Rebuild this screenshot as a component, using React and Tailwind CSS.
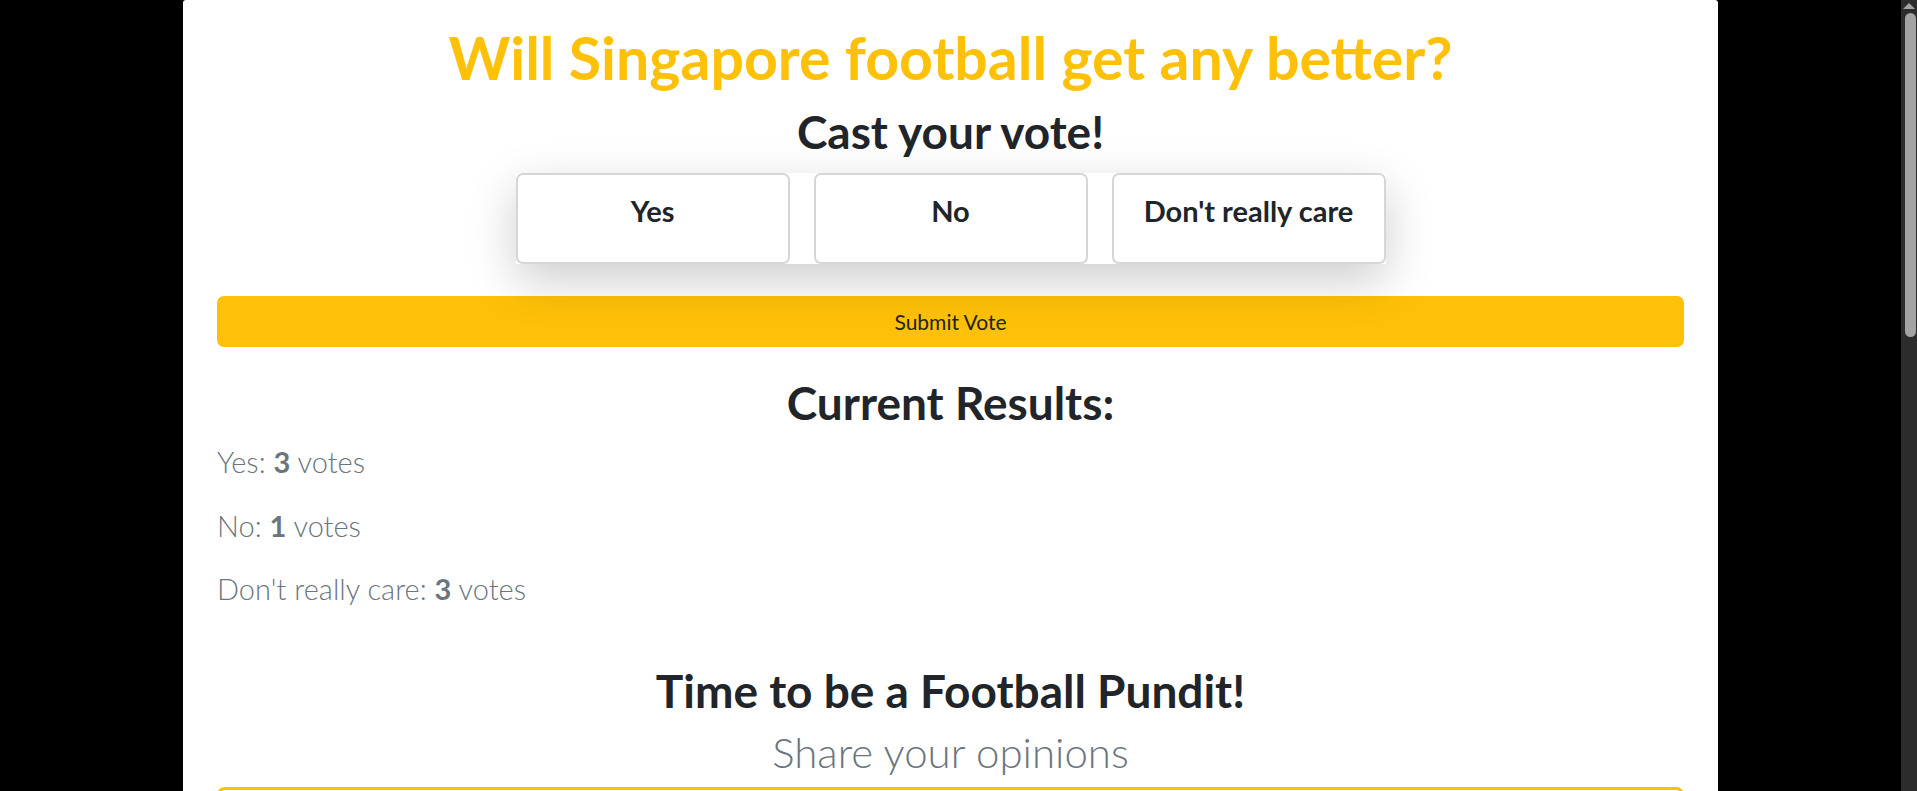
import React, { useState } from 'react';

const options = ["Yes", "No", "Don't really care"];

function ScrollTrack() {
  return (
    <div className="w-4 shrink-0 bg-[#2c2c2c] flex flex-col items-center">
      <div className="mt-[3px] w-0 h-0 border-x-[6px] border-x-transparent border-b-[6px] border-b-[#a3a3a3]"></div>
      <div className="mt-[4px] ml-[2px] w-[11px] h-[324px] rounded-full bg-[#a3a3a3]"></div>
    </div>
  );
}

export default function App() {
  const [choice, setChoice] = useState(null);
  const [votes] = useState({ "Yes": 3, "No": 1, "Don't really care": 3 });

  return (
    <div className="flex h-screen bg-black font-['Lato',sans-serif]">
      <div className="flex-1 overflow-y-auto">
        <div className="mx-auto w-[1535px] min-h-[1900px] bg-white rounded-t-[3px] px-[34px] pt-[23px] text-[#212529]">
          <h1 className="text-center text-[59px] leading-[1.2] font-bold text-[#ffc107] mb-[10px]">
            Will Singapore football get any better?
          </h1>
          <h2 className="text-center text-[46px] leading-[1.2] font-bold mb-[14px]">Cast your vote!</h2>

          <div className="flex justify-center">
            <div className="relative flex gap-6 bg-white shadow-[0_1rem_3rem_rgba(0,0,0,0.2)]">
              {options.map((o) => (
                <button
                  key={o}
                  onClick={() => setChoice(o)}
                  className={`w-[274px] h-[91px] border-2 rounded-[7px] bg-white pt-[14px] text-[29px] leading-[1.5] font-bold text-[#212529] flex justify-center items-start ${choice === o ? 'border-[#ffc107]' : 'border-[#d6d6d6]'}`}
                >
                  {o}
                </button>
              ))}
            </div>
          </div>

          <button className="mt-[32px] w-full h-[51px] rounded-[7px] bg-[#ffc107] text-[21px] text-[#212529]">
            Submit Vote
          </button>

          <h2 className="text-center text-[46px] leading-[1.2] font-bold mt-[28px] mb-[10px]">Current Results:</h2>
          <div className="text-[29px] leading-[1.5] font-light text-[#6c757d]">
            {options.map((o) => (
              <p key={o} className="mb-[20px]">
                {o}: <span className="font-bold">{votes[o]}</span> votes
              </p>
            ))}
          </div>

          <h2 className="text-center text-[46px] leading-[1.2] font-bold mt-[52px]">Time to be a Football Pundit!</h2>
          <p className="text-center text-[42px] leading-[1.2] font-light text-[#6c757d] mt-[9px]">Share your opinions</p>

          <div className="mt-[10px] border-[3px] border-[#ffc107] rounded-lg h-[420px]"></div>
        </div>
      </div>
      <ScrollTrack />
    </div>
  );
}
